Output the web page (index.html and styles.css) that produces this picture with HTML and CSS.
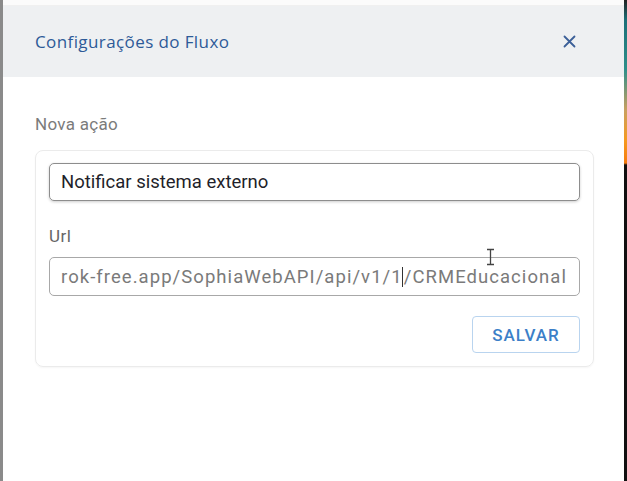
FILE: index.html
```html
<!DOCTYPE html>
<html lang="pt">
<head>
<meta charset="utf-8">
<link rel="stylesheet" href="styles.css">
</head>
<body>
<div class="screen">
  <div class="edge-left"></div>
  <div class="modal">
    <div class="top-gap"></div>
    <header class="modal-header">
      <h1 class="modal-title">Configurações do Fluxo</h1>
      <button class="close-btn" aria-label="Fechar">
        <svg width="13" height="13" viewBox="0 0 13 13"><path d="M1.5 1.5L11.5 11.5M11.5 1.5L1.5 11.5" stroke="#3b5f98" stroke-width="1.8" fill="none" stroke-linecap="round"/></svg>
      </button>
    </header>
    <div class="modal-body">
      <div class="section-label">Nova ação</div>
      <div class="card">
        <div class="field field-name">Notificar sistema externo</div>
        <div class="field-label">Url</div>
        <div class="field field-url"><span>rok-free.app/SophiaWebAPI/api/v1/1</span><span class="caret"></span><span>/CRMEducacional</span>
          <svg class="ibeam" width="9" height="18" viewBox="0 0 9 18"><path d="M1 1.5H8M4.5 1.5V16.5M1 16.5H8" stroke="#444" stroke-width="1.3" fill="none"/></svg>
        </div>
        <div class="actions">
          <button class="save-btn">Salvar</button>
        </div>
      </div>
    </div>
  </div>
  <div class="edge-right"></div>
</div>
</body>
</html>
```

FILE: styles.css
```css
html, body {
  margin: 0;
  padding: 0;
  background: #ffffff;
}
.screen {
  display: flex;
  width: 627px;
  height: 481px;
  overflow: hidden;
}
.edge-left {
  width: 3px;
  background: #8a8a8a;
  flex: none;
}
.edge-right {
  width: 3px;
  flex: none;
  background: linear-gradient(to bottom, #222 0px, #1b6f78 20px, #2f8f8a 70px, #c9a060 110px, #f59a20 140px, #f57c10 163px, #111 165px, #111 100%);
}
.modal {
  flex: 1;
  display: flex;
  flex-direction: column;
  background: #ffffff;
}
.top-gap {
  height: 5px;
  background: #fbfbfb;
  border-bottom: 1px solid #f0f0f0;
}
.modal-header {
  height: 71px;
  background: #eef0f2;
  display: flex;
  align-items: center;
  justify-content: space-between;
  padding: 0 48px 0 32px;
}
.modal-title {
  margin: 0;
  font-family: "Open Sans", sans-serif;
  font-size: 17px;
  font-weight: 400;
  color: #2d5a98;
  letter-spacing: 0.4px;
}
.close-btn {
  border: 0;
  background: none;
  padding: 0;
  width: 13px;
  height: 13px;
  display: flex;
}
.modal-body {
  padding: 36px 30px 0 32px;
}
.section-label {
  font-family: Roboto, sans-serif;
  font-size: 17px;
  color: #7b7b7b;
  line-height: 22px;
  letter-spacing: 0.3px;
}
.card {
  margin-top: 15px;
  border: 1px solid #ebebeb;
  border-radius: 8px;
  padding: 12px 13px 13px 13px;
  box-shadow: 0 1px 2px rgba(0,0,0,0.04);
}
.field {
  height: 38px;
  box-sizing: border-box;
  border-radius: 5px;
  display: flex;
  align-items: center;
  padding-left: 11px;
  font-family: Roboto, sans-serif;
  font-size: 18.5px;
  white-space: nowrap;
  position: relative;
}
.field-name {
  border: 1px solid #8d8d8d;
  color: #1f1f2a;
  box-shadow: 0 1px 3px rgba(0,0,0,0.2);
}
.field-label {
  font-family: Roboto, sans-serif;
  font-size: 17px;
  color: #666;
  line-height: 22px;
  margin-top: 24px;
  margin-bottom: 10px;
  letter-spacing: 0.5px;
}
.field-url {
  border: 1px solid #a8a8a8;
  color: #7a7a7a;
  height: 39px;
  letter-spacing: 1.05px;
}
.caret {
  display: inline-block;
  width: 1px;
  height: 20px;
  background: #333;
  margin: 0 1px 0 -1px;
}
.ibeam {
  position: absolute;
  left: 436px;
  top: -10px;
}
.actions {
  display: flex;
  justify-content: flex-end;
  margin-top: 20px;
}
.save-btn {
  width: 108px;
  height: 37px;
  border: 1px solid #b9d4ef;
  border-radius: 4px;
  background: #fff;
  color: #3c7fc8;
  font-family: Roboto, sans-serif;
  font-size: 17px;
  font-weight: 500;
  text-transform: uppercase;
  letter-spacing: 1px;
}
```
